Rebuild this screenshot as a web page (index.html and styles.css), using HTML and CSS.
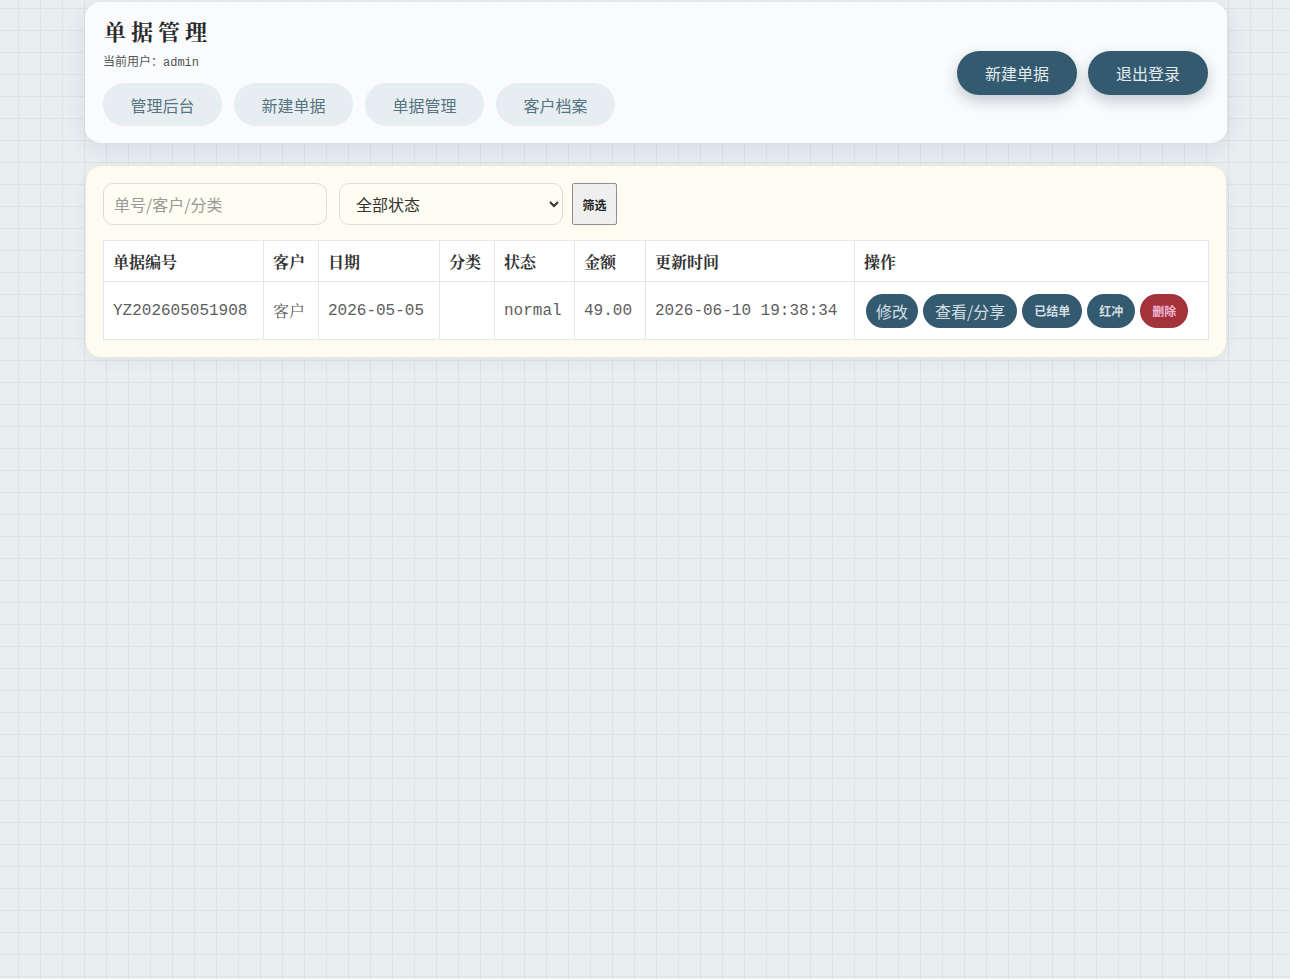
FILE: index.html
```html
<!DOCTYPE html>
<html lang="zh-CN">
<head>
<meta charset="UTF-8">
<meta name="viewport" content="width=device-width, initial-scale=1.0">
<title>单据管理</title>
<link rel="stylesheet" href="styles.css">
</head>
<body>
<div class="page">
  <div class="header-card">
    <div class="header-left">
      <h1>单据管理</h1>
      <div class="user-line">当前用户：<span class="mono">admin</span></div>
      <div class="nav">
        <a href="#" class="nav-pill">管理后台</a>
        <a href="#" class="nav-pill">新建单据</a>
        <a href="#" class="nav-pill">单据管理</a>
        <a href="#" class="nav-pill">客户档案</a>
      </div>
    </div>
    <div class="header-right">
      <a href="#" class="main-btn">新建单据</a>
      <a href="#" class="main-btn">退出登录</a>
    </div>
  </div>

  <div class="list-card">
    <form class="filter">
      <input type="text" class="filter-input" placeholder="单号/客户/分类">
      <select class="filter-select">
        <option>全部状态</option>
        <option>normal</option>
      </select>
      <button type="button" class="filter-btn">筛选</button>
    </form>
    <table class="bills">
      <thead>
        <tr>
          <th class="col-no">单据编号</th>
          <th class="col-cust">客户</th>
          <th class="col-date">日期</th>
          <th class="col-cat">分类</th>
          <th class="col-status">状态</th>
          <th class="col-amount">金额</th>
          <th class="col-time">更新时间</th>
          <th class="col-ops">操作</th>
        </tr>
      </thead>
      <tbody>
        <tr>
          <td>YZ202605051908</td>
          <td>客户</td>
          <td>2026-05-05</td>
          <td></td>
          <td>normal</td>
          <td>49.00</td>
          <td>2026-06-10 19:38:34</td>
          <td>
            <div class="ops">
              <a href="#" class="op-btn">修改</a>
              <a href="#" class="op-btn wide">查看/分享</a>
              <button type="button" class="op-btn small">已结单</button>
              <button type="button" class="op-btn small">红冲</button>
              <button type="button" class="op-btn small danger">删除</button>
            </div>
          </td>
        </tr>
      </tbody>
    </table>
  </div>
</div>
</body>
</html>
```

FILE: styles.css
```css
html {
  background: #e9eef1;
}

body {
  margin: 0;
  min-height: 979px;
  font-family: "Noto Sans CJK SC", "Noto Sans", sans-serif;
  color: #333;
  background-color: #e9eef1;
  background-image:
    linear-gradient(to right, #dde3e7 1px, transparent 1px),
    linear-gradient(to bottom, #dde3e7 1px, transparent 1px);
  background-size: 22px 22px;
  background-position: 18px 8px;
}

.page {
  width: 1142px;
  padding: 2px 0 0 85px;
}

.mono {
  font-family: "Liberation Mono", monospace;
}

/* header */
.header-card {
  display: flex;
  justify-content: space-between;
  align-items: center;
  padding: 17px 19px 17px 18px;
  background: #f9fbfc;
  border-radius: 16px;
  box-shadow: 0 6px 22px rgba(40, 60, 75, 0.10);
}

h1 {
  margin: 0 0 0 1px;
  font-family: "Noto Serif CJK SC", "Liberation Serif", serif;
  font-size: 22px;
  line-height: 24px;
  font-weight: bold;
  letter-spacing: 5px;
  color: #2b2b2b;
}

.user-line {
  margin-top: 10px;
  font-size: 12px;
  line-height: 16px;
  color: #555;
}

.nav {
  display: flex;
  gap: 12px;
  margin-top: 12px;
}

.nav-pill {
  display: flex;
  align-items: center;
  justify-content: center;
  width: 119px;
  height: 43px;
  border-radius: 22px;
  background: #e7eef1;
  color: #587382;
  font-size: 16px;
  text-decoration: none;
}

.header-right {
  display: flex;
  gap: 11px;
}

.main-btn {
  display: flex;
  align-items: center;
  justify-content: center;
  width: 120px;
  height: 44px;
  border-radius: 22px;
  background: #335a6e;
  color: #e3ebee;
  font-size: 16px;
  text-decoration: none;
  box-shadow: 0 6px 14px rgba(30, 60, 80, 0.25);
}

/* list */
.list-card {
  margin-top: 22px;
  padding: 17px 18px 17px 17px;
  background: #fefcf0;
  border: 1px solid #ebe8d8;
  border-radius: 16px;
  box-shadow: 0 4px 14px rgba(40, 60, 75, 0.06);
}

.filter {
  display: flex;
  align-items: center;
  gap: 12px;
  margin: 0 0 15px;
}

.filter-input,
.filter-select {
  box-sizing: border-box;
  width: 224px;
  height: 42px;
  padding: 0 10px;
  border: 1px solid #dcdcd2;
  border-radius: 10px;
  background: #fffdf2;
  font-family: "Noto Sans CJK SC", sans-serif;
  font-size: 16px;
  color: #333;
}

.filter-input::placeholder {
  color: #999;
}

.filter-select {
  padding-left: 12px;
}

.filter-btn {
  box-sizing: border-box;
  width: 45px;
  height: 42px;
  margin-left: -3px;
  border: 1px solid #8f8f8f;
  border-radius: 2px;
  background: #efefef;
  font-family: "Noto Sans CJK SC", sans-serif;
  font-size: 12px;
  font-weight: bold;
  color: #222;
}

.bills {
  width: 1106px;
  border-collapse: collapse;
  background: #fff;
  font-family: "Liberation Mono", "Noto Serif CJK SC", serif;
  font-size: 16px;
}

.bills th,
.bills td {
  border: 1px solid #e2e7ea;
  padding: 0 9px;
  text-align: left;
  white-space: nowrap;
}

.bills th {
  height: 40px;
  font-weight: bold;
  color: #333;
}

.bills td {
  height: 57px;
  color: #5e5e5e;
}

.col-no { width: 141px; }
.col-cust { width: 36px; }
.col-date { width: 102px; }
.col-cat { width: 36px; }
.col-status { width: 61px; }
.col-amount { width: 52px; }
.col-time { width: 190px; }

.ops {
  display: flex;
  gap: 5px;
  padding-left: 2px;
}

.op-btn {
  display: flex;
  align-items: center;
  height: 34px;
  padding: 0 10px;
  border: none;
  border-radius: 17px;
  background: #335a6e;
  color: #d3dee3;
  font-family: "Noto Sans CJK SC", sans-serif;
  font-size: 16px;
  text-decoration: none;
}

.op-btn.wide {
  padding: 0 12px;
}

.op-btn.small {
  padding: 0 12px;
  font-size: 12px;
  font-weight: bold;
}

.op-btn.danger {
  background: #a3323a;
  color: #f2b6d8;
}
```
